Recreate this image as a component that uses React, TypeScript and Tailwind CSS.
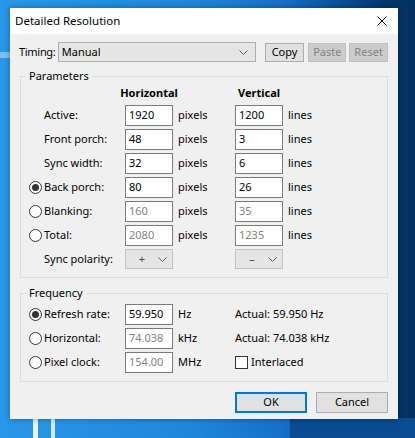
import type { ReactNode } from "react";

function Radio({ checked = false }: { checked?: boolean }) {
  return (
    <span className="flex size-[13px] items-center justify-center rounded-full border border-[#333333] bg-white">
      {checked && <span className="size-[7px] rounded-full bg-[#333333]" />}
    </span>
  );
}

function Field({ value, disabled = false }: { value: string; disabled?: boolean }) {
  return (
    <div
      className={`flex h-[21px] w-[48px] items-center border border-[#7a7a7a] bg-white pl-[3px] ${
        disabled ? "text-[#838383]" : "text-black"
      }`}
    >
      {value}
    </div>
  );
}

function Chevron({ className = "" }: { className?: string }) {
  return (
    <svg width="9" height="5" viewBox="0 0 9 5" className={className}>
      <polyline points="0.5,0.5 4.5,4.5 8.5,0.5" fill="none" stroke="#5c5c5c" strokeWidth="1" />
    </svg>
  );
}

function Polarity({ sign }: { sign: string }) {
  return (
    <div className="flex h-[20px] w-[48px] items-center border border-[#c4c4c4] bg-[#e5e5e5] text-[#4a4a4a]">
      <span className="w-[30px] pl-[2px] text-center">{sign}</span>
      <Chevron className="ml-[2px]" />
    </div>
  );
}

function Row({
  radio,
  label,
  h,
  v,
  hDisabled,
  vDisabled,
}: {
  radio?: "on" | "off";
  label: string;
  h: string;
  v: string;
  hDisabled?: boolean;
  vDisabled?: boolean;
}) {
  return (
    <>
      <div className="flex h-[21px] items-center">{radio && <Radio checked={radio === "on"} />}</div>
      <div className="flex items-center">{label}</div>
      <Field value={h} disabled={hDisabled} />
      <div className="flex items-center pl-[5px]">pixels</div>
      <Field value={v} disabled={vDisabled} />
      <div className="flex items-center pl-[5px]">lines</div>
    </>
  );
}

function Group({ title, children, className = "" }: { title: string; children: ReactNode; className?: string }) {
  return (
    <fieldset className={`w-[368px] border border-[#dcdcdc] ${className}`}>
      <legend className="ml-[5px] px-[3px] leading-[16px]">{title}</legend>
      {children}
    </fieldset>
  );
}

function Button({ children, variant = "normal", className = "" }: { children: ReactNode; variant?: "normal" | "disabled" | "default"; className?: string }) {
  const look =
    variant === "default"
      ? "border-2 border-[#0078d7] bg-[#e1e1e1] text-black"
      : variant === "disabled"
        ? "border border-[#bfbfbf] bg-[#cccccc] text-[#838383]"
        : "border border-[#adadad] bg-[#e1e1e1] text-black";
  return <div className={`flex items-center justify-center ${look} ${className}`}>{children}</div>;
}

export default function App() {
  return (
    <div className="relative h-[438px] w-[415px] overflow-hidden bg-[linear-gradient(90deg,#2a97e8_0%,#1f88dc_45%,#1670c8_68%,#0b4f98_82%,#04386f_92%,#03305f_100%)] pl-[10px] pt-[8px] font-['Noto_Sans',sans-serif] text-[11px] text-black">
      {/* wallpaper light streaks */}
      <div className="absolute left-[33px] top-[418px] h-[20px] w-[5px] bg-white/90" />
      <div className="absolute left-[51px] top-[418px] h-[20px] w-[4px] bg-white/80" />
      <div className="absolute left-[290px] top-[418px] h-[20px] w-[125px] bg-[#0a4b91]" />
      <div className="absolute left-0 top-[52px] h-[6px] w-[10px] bg-white/40" />

      <div className="relative flex h-[411px] w-[388px] flex-col bg-[#f0f0f0] shadow-[0_0_6px_rgba(0,0,0,0.35)]">
        <div className="flex h-[26px] items-center justify-between bg-white pl-[5px] pr-[11px]">
          <span className="text-[11.5px]">Detailed Resolution</span>
          <svg width="10" height="10" viewBox="0 0 10 10">
            <path d="M0.5 0.5 L9.5 9.5 M9.5 0.5 L0.5 9.5" stroke="#000" strokeWidth="1" />
          </svg>
        </div>

        <div className="flex flex-col px-[10px] pt-[8px]">
          <div className="-ml-[1px] flex h-[20px] items-center">
            <span className="w-[39px] tracking-[-0.3px]">Timing:</span>
            <div className="flex h-[20px] w-[199px] items-center justify-between border border-[#adadad] bg-[#e5e5e5] pl-[3px] pr-[7px]">
              <span>Manual</span>
              <Chevron />
            </div>
            <Button className="ml-[9px] h-[19px] w-[40px]">Copy</Button>
            <Button variant="disabled" className="ml-[4px] h-[19px] w-[38px]">Paste</Button>
            <Button variant="disabled" className="ml-[3px] h-[19px] w-[39px]">Reset</Button>
          </div>

          <Group title="Parameters" className="mt-[6px] pb-[8px] pt-[1px]">
            <div className="grid grid-cols-[15px_81px_48px_62px_48px_1fr] gap-y-[3px] pl-[8px]">
              <div />
              <div />
              <div className="mb-[1px] flex h-[16px] justify-center whitespace-nowrap font-bold">Horizontal</div>
              <div />
              <div className="mb-[1px] flex h-[16px] justify-center whitespace-nowrap font-bold">Vertical</div>
              <div />
              <Row label="Active:" h="1920" v="1200" />
              <Row label="Front porch:" h="48" v="3" />
              <Row label="Sync width:" h="32" v="6" />
              <Row radio="on" label="Back porch:" h="80" v="26" />
              <Row radio="off" label="Blanking:" h="160" v="35" hDisabled vDisabled />
              <Row radio="off" label="Total:" h="2080" v="1235" hDisabled vDisabled />
              <div />
              <div className="flex items-center">Sync polarity:</div>
              <Polarity sign="+" />
              <div />
              <Polarity sign="–" />
              <div />
            </div>
          </Group>

          <Group title="Frequency" className="mt-[7px] pb-[8px] pt-[3px]">
            <div className="grid grid-cols-[15px_81px_48px_62px_48px_1fr] gap-y-[3px] pl-[8px]">
              <div className="flex h-[21px] items-center"><Radio checked /></div>
              <div className="flex items-center">Refresh rate:</div>
              <Field value="59.950" />
              <div className="flex items-center pl-[5px]">Hz</div>
              <div className="col-span-2 flex items-center">Actual: 59.950 Hz</div>

              <div className="flex h-[21px] items-center"><Radio /></div>
              <div className="flex items-center">Horizontal:</div>
              <Field value="74.038" disabled />
              <div className="flex items-center pl-[5px]">kHz</div>
              <div className="col-span-2 flex items-center">Actual: 74.038 kHz</div>

              <div className="flex h-[21px] items-center"><Radio /></div>
              <div className="flex items-center">Pixel clock:</div>
              <Field value="154.00" disabled />
              <div className="flex items-center pl-[5px]">MHz</div>
              <div className="col-span-2 flex items-center gap-[3px]">
                <span className="size-[13px] border border-[#333333] bg-white" />
                <span>Interlaced</span>
              </div>
            </div>
          </Group>

          <div className="mt-[10px] flex justify-end gap-[9px]">
            <Button variant="default" className="h-[21px] w-[72px]">OK</Button>
            <Button className="h-[21px] w-[72px]">Cancel</Button>
          </div>
        </div>
      </div>
    </div>
  );
}
